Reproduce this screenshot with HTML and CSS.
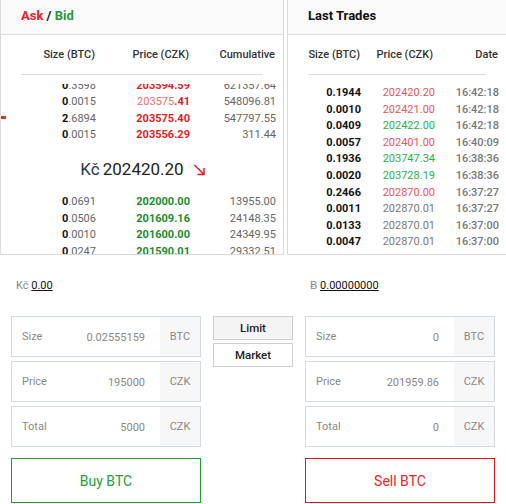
FILE: index.html
```html
<!DOCTYPE html>
<html lang="cs">
<head>
<meta charset="utf-8">
<title>Exchange</title>
<link rel="stylesheet" href="styles.css">
</head>
<body>
<div class="top">
  <section class="panel book">
    <div class="panel-head"><span class="ask">Ask</span> / <span class="bid">Bid</span></div>
    <div class="cols book-cols"><span>Size (BTC)</span><span>Price (CZK)</span><span>Cumulative</span></div>
    <div class="rule book-rule"></div>
    <div class="asks">
      <div class="row book-row"><span class="sz"><b>0</b>.3598</span><span class="px-ask">203594.59</span><span class="cum">621357.64</span></div>
      <div class="row book-row"><span class="sz"><b>0</b>.0015</span><span class="px-ask"><span class="light">203575</span>.41</span><span class="cum">548096.81</span></div>
      <div class="row book-row"><span class="sz"><b>2</b>.6894</span><span class="px-ask">203575.40</span><span class="cum">547797.55</span></div>
      <div class="row book-row"><span class="sz"><b>0</b>.0015</span><span class="px-ask">203556.29</span><span class="cum">311.44</span></div>
    </div>
    <div class="mid">
      <span class="mid-cur">Kč</span><span class="mid-num">202420.20</span>
      <svg class="mid-arrow" width="13" height="12" viewBox="0 0 13 12"><path d="M1.5 1 L11 10.5 M11 4 V10.5 H4.5" fill="none" stroke="#e3201e" stroke-width="1.5"/></svg>
    </div>
    <div class="bids">
      <div class="row book-row"><span class="sz"><b>0</b>.0691</span><span class="px-bid">202000.00</span><span class="cum">13955.00</span></div>
      <div class="row book-row"><span class="sz"><b>0</b>.0506</span><span class="px-bid">201609.16</span><span class="cum">24148.35</span></div>
      <div class="row book-row"><span class="sz"><b>0</b>.0010</span><span class="px-bid">201600.00</span><span class="cum">24349.95</span></div>
      <div class="row book-row"><span class="sz"><b>0</b>.0247</span><span class="px-bid">201590.01</span><span class="cum">29332.51</span></div>
    </div>
    <i class="marker"></i>
  </section>
  <section class="panel trades">
    <div class="panel-head">Last Trades</div>
    <div class="cols trade-cols"><span>Size (BTC)</span><span>Price (CZK)</span><span>Date</span></div>
    <div class="rule trade-rule"></div>
    <div class="trade-list">
      <div class="row trade-row"><span class="tsz">0.1944</span><span class="t-red">202420.20</span><span class="tdate">16:42:18</span></div>
      <div class="row trade-row"><span class="tsz">0.0010</span><span class="t-red">202421.00</span><span class="tdate">16:42:18</span></div>
      <div class="row trade-row"><span class="tsz">0.0409</span><span class="t-green">202422.00</span><span class="tdate">16:42:18</span></div>
      <div class="row trade-row"><span class="tsz">0.0057</span><span class="t-red">202401.00</span><span class="tdate">16:40:09</span></div>
      <div class="row trade-row"><span class="tsz">0.1936</span><span class="t-green">203747.34</span><span class="tdate">16:38:36</span></div>
      <div class="row trade-row"><span class="tsz">0.0020</span><span class="t-green">203728.19</span><span class="tdate">16:38:36</span></div>
      <div class="row trade-row"><span class="tsz">0.2466</span><span class="t-red">202870.00</span><span class="tdate">16:37:27</span></div>
      <div class="row trade-row"><span class="tsz">0.0011</span><span class="t-gray">202870.01</span><span class="tdate">16:37:27</span></div>
      <div class="row trade-row"><span class="tsz">0.0133</span><span class="t-gray">202870.01</span><span class="tdate">16:37:00</span></div>
      <div class="row trade-row"><span class="tsz">0.0047</span><span class="t-gray">202870.01</span><span class="tdate">16:37:00</span></div>
    </div>
  </section>
</div>

<div class="forms">
  <div class="balance">Kč <a class="bal-val">0.00</a></div>
  <div></div>
  <div class="balance balance-r">Ƀ <a class="bal-val">0.00000000</a></div>

  <div class="stack">
    <div class="field"><span class="label">Size</span><span class="value">0.02555159</span><span class="addon">BTC</span></div>
    <div class="field"><span class="label">Price</span><span class="value">195000</span><span class="addon">CZK</span></div>
    <div class="field"><span class="label">Total</span><span class="value">5000</span><span class="addon">CZK</span></div>
    <button class="act act-buy">Buy BTC</button>
  </div>
  <div class="types">
    <button class="type type-on">Limit</button>
    <button class="type">Market</button>
  </div>
  <div class="stack">
    <div class="field"><span class="label">Size</span><span class="value">0</span><span class="addon">BTC</span></div>
    <div class="field"><span class="label">Price</span><span class="value">201959.86</span><span class="addon">CZK</span></div>
    <div class="field"><span class="label">Total</span><span class="value">0</span><span class="addon">CZK</span></div>
    <button class="act act-sell">Sell BTC</button>
  </div>
</div>
</body>
</html>
```

FILE: styles.css
```css
* { box-sizing: border-box; }
body {
  margin: 0;
  width: 506px;
  height: 504px;
  overflow: hidden;
  background: #fff;
  color: #222;
  font-family: Roboto, "Liberation Sans", sans-serif;
}
.top {
  display: flex;
  gap: 3px;
  height: 255px;
}
.panel {
  position: relative;
  flex: none;
  height: 255px;
  border: 1px solid #dadada;
  border-top: 0;
  overflow: hidden;
  background: #fff;
}
.book { width: 284px; }
.trades { width: 240px; }
.panel-head {
  height: 35px;
  border-bottom: 1px solid #dedede;
  background: #fafafa;
  padding-left: 20px;
  font-size: 13px;
  font-weight: 700;
  line-height: 32px;
  color: #111;
}
.ask { color: #e8202a; }
.bid { color: #1f9a3a; }
.cols {
  display: grid;
  height: 39px;
  align-items: center;
  text-align: right;
  font-size: 11px;
  font-weight: 500;
  color: #333;
}
.book-cols { grid-template-columns: 94px 94px 86px; }
.trade-cols { grid-template-columns: 72px 73px 65px; }
.rule {
  height: 1px;
  background: #dcdcdc;
  margin-left: 20px;
}
.book-rule { width: 242px; }
.trade-rule { width: 178px; }
.row {
  display: grid;
  flex: none;
  height: 16.6px;
  line-height: 16.6px;
  font-size: 11px;
  text-align: right;
}
.book-row { grid-template-columns: 95px 94px 86px; }
.asks {
  height: 60px;
  margin-top: 9px;
  display: flex;
  flex-direction: column;
  justify-content: flex-end;
  overflow: hidden;
}
.sz { color: #666; }
.sz b { color: #111; font-weight: 700; }
.px-ask { color: #e31b1b; font-weight: 700; }
.px-ask .light { color: #ee6a6a; font-weight: 400; }
.px-bid { color: #188c2c; font-weight: 700; }
.cum { color: #666; }
.mid {
  height: 50px;
  display: flex;
  align-items: center;
  justify-content: center;
  padding-left: 2px;
}
.mid-cur { font-size: 17px; color: #2b3550; margin-right: 3px; }
.mid-num { font-size: 17px; color: #222; }
.mid-arrow { margin-left: 9px; margin-top: 2px; }
.marker {
  position: absolute;
  left: 0;
  top: 116px;
  width: 5px;
  height: 3px;
  background: #e0301e;
}
.trade-list { margin-top: 10px; }
.trade-row { grid-template-columns: 73px 74px 64px; }
.tsz { color: #111; font-weight: 700; }
.t-red { color: #ec5656; }
.t-green { color: #2bb04b; }
.t-gray { color: #787878; }
.tdate { color: #777; font-weight: 500; }

.forms {
  display: grid;
  grid-template-columns: 190px 80px 190px;
  column-gap: 12px;
  padding: 24px 0 0 11px;
}
.balance {
  font-size: 11px;
  line-height: 14px;
  color: #888;
  padding-left: 5px;
  margin-bottom: 23px;
}
.balance-r { padding-left: 5px; }
.bal-val {
  color: #111;
  text-decoration: underline;
}
.stack {
  display: flex;
  flex-direction: column;
  gap: 4px;
}
.field {
  display: flex;
  height: 41px;
  border: 1px solid #d3dbe2;
  font-size: 11px;
  color: #888;
}
.label {
  flex: none;
  display: flex;
  align-items: center;
  padding-left: 10px;
  padding-bottom: 1px;
}
.value {
  flex: 1;
  display: flex;
  align-items: center;
  justify-content: flex-end;
  padding-right: 15px;
  padding-top: 2px;
}
.addon {
  flex: none;
  width: 40px;
  display: flex;
  align-items: center;
  justify-content: center;
  background: #f7f7f7;
}
.act {
  margin-top: 7px;
  height: 45px;
  background: #fff;
  font-family: inherit;
  font-size: 14px;
  border: 1px solid;
}
.act-buy { border-color: #1ea030; color: #22a03a; }
.act-sell { border-color: #e8121a; color: #e5262a; }
.types {
  display: flex;
  flex-direction: column;
  gap: 3px;
}
.type {
  height: 24px;
  border: 1px solid #cfcfcf;
  background: #fff;
  font-family: inherit;
  font-size: 11.5px;
  font-weight: 500;
  color: #222;
  padding: 0;
}
.type-on { background: #f4f4f4; }
```
